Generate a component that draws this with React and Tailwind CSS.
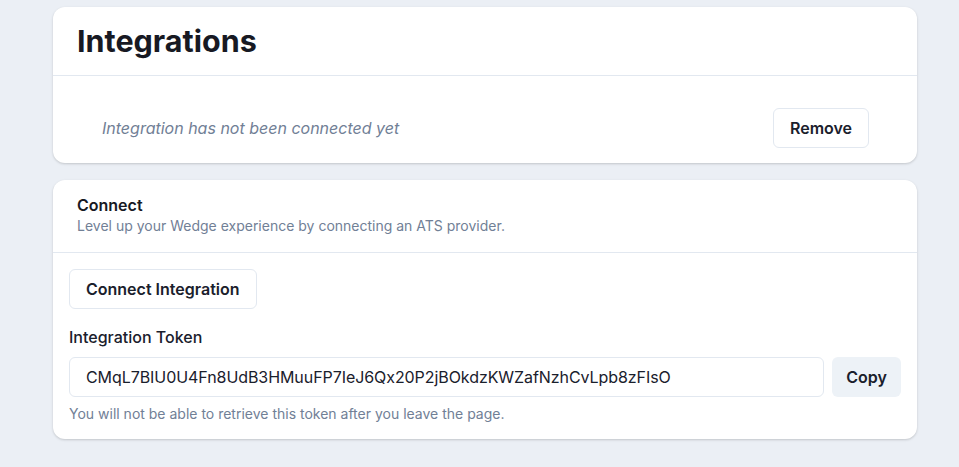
export default function App() {
  const token = "CMqL7BIU0U4Fn8UdB3HMuuFP7IeJ6Qx20P2jBOkdzKWZafNzhCvLpb8zFIsO";

  return (
    <div
      className="min-h-[467px] w-[959px] bg-[#ebeff5] pt-[7px] pl-[53px] pr-[42px] text-[#1a202c]"
      style={{ fontFamily: "Inter, 'Noto Sans', sans-serif" }}
    >
      {/* Integrations card */}
      <div className="rounded-xl bg-white shadow-[0_1px_3px_rgba(0,0,0,0.12),0_1px_2px_rgba(0,0,0,0.06)]">
        <div className="flex h-[69px] items-center border-b border-[#e2e8f0] px-6">
          <h1 className="text-[30.5px] font-bold leading-none text-[#171923]">Integrations</h1>
        </div>
        <div className="flex items-center justify-between pt-8 pb-[15px] pl-[49px] pr-12">
          <p className="text-[16px] italic text-[#718096]">Integration has not been connected yet</p>
          <button className="h-10 w-24 rounded-md border border-[#e2e8f0] bg-white text-[16px] font-semibold text-[#1a202c]">
            Remove
          </button>
        </div>
      </div>

      {/* Connect card */}
      <div className="mt-[17px] rounded-xl bg-white shadow-[0_1px_3px_rgba(0,0,0,0.12),0_1px_2px_rgba(0,0,0,0.06)]">
        <div className="h-[73px] border-b border-[#e2e8f0] px-6 pt-[13px]">
          <h2 className="text-[16px] font-semibold leading-6 text-[#171923]">Connect</h2>
          <p className="text-[14px] leading-[18px] text-[#718096]">
            Level up your Wedge experience by connecting an ATS provider.
          </p>
        </div>
        <div className="px-4 pt-4 pb-[15px]">
          <button className="h-10 rounded-md border border-[#e2e8f0] bg-white px-4 text-[16px] font-semibold text-[#1a202c]">
            Connect Integration
          </button>
          <div className="mt-4 text-[16px] font-medium leading-6 text-[#1a202c]">Integration Token</div>
          <div className="mt-2 flex gap-2">
            <div className="flex h-10 flex-1 items-center rounded-md border border-[#e2e8f0] px-4 text-[16px] tracking-[-0.07px] text-[#1a202c]">
              {token}
            </div>
            <button className="h-10 w-[69px] rounded-md bg-[#edf2f7] text-[16px] font-semibold text-[#1a202c]">
              Copy
            </button>
          </div>
          <p className="mt-[7px] text-[14px] leading-5 text-[#718096]">
            You will not be able to retrieve this token after you leave the page.
          </p>
        </div>
      </div>
    </div>
  );
}
